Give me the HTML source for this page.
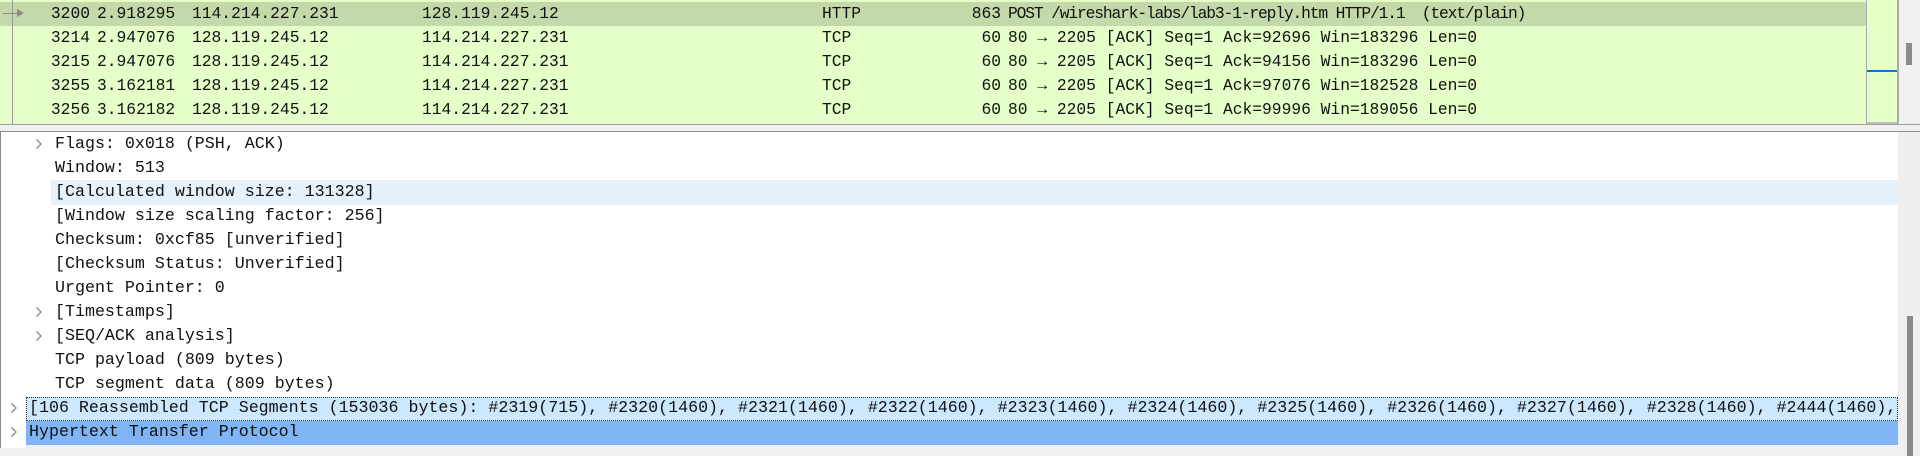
<!DOCTYPE html>
<html><head><meta charset="utf-8"><style>
*{margin:0;padding:0;box-sizing:border-box}
body{width:1920px;height:448px;background:#f0f0f0;position:relative;overflow:hidden;font-family:"Liberation Mono",monospace;font-size:16.3px;color:#111}
.a{position:absolute;white-space:pre;line-height:24px}
.d{font-size:16.65px}
#top{position:absolute;left:0;top:0;width:1920px;height:125px;background:#e4ffc7;border-bottom:1px solid #a0a0a0}
.row{position:absolute;left:0;width:1866px;height:24px}
.sel{background:#c4d9a9;top:2px;border-radius:2px}
#det{position:absolute;left:0;top:131px;width:1920px;height:317px;background:#fff;border-top:1px solid #8c8c8c;border-left:1px solid #8c8c8c}
.chev{position:absolute;width:8px;height:12px}
</style></head><body>
<div id="top">
  <div class="row sel" style="top:2px"></div>
  <div style="position:absolute;left:12px;top:0;width:1px;height:124px;background:#999"></div>
  <div style="position:absolute;left:3px;top:13px;width:16px;height:1px;background:#8a8a8a"></div>
  <div style="position:absolute;left:17px;top:9px;width:0;height:0;border-left:7px solid #8a8a8a;border-top:4px solid transparent;border-bottom:4px solid transparent"></div>
  <div style="position:absolute;left:1866px;top:0;width:1px;height:124px;background:#aaa"></div>
  <div style="position:absolute;left:1897px;top:0;width:2px;height:124px;background:#aaa"></div>
  <div style="position:absolute;left:1867px;top:122px;width:30px;height:2px;background:#bbb"></div>
  <div style="position:absolute;left:1867px;top:70px;width:30px;height:2px;background:#0078d7"></div>
  <div style="position:absolute;left:1899px;top:0;width:21px;height:124px;background:#f0f0f0"></div>
  <div style="position:absolute;left:1906px;top:43px;width:6px;height:22px;background:#8a8a8a"></div>
</div>
<div class="a" style="left:0;top:2px;width:90px;text-align:right">3200</div>
<div class="a" style="left:97px;top:2px">2.918295</div>
<div class="a" style="left:192px;top:2px">114.214.227.231</div>
<div class="a" style="left:422px;top:2px">128.119.245.12</div>
<div class="a" style="left:822px;top:2px">HTTP</div>
<div class="a" style="left:900px;top:2px;width:101px;text-align:right">863</div>
<div class="a" style="left:1008px;top:2px;letter-spacing:-1.15px">POST /wireshark-labs/lab3-1-reply.htm HTTP/1.1  (text/plain)</div>

<div class="a" style="left:0;top:26px;width:90px;text-align:right">3214</div>
<div class="a" style="left:97px;top:26px">2.947076</div>
<div class="a" style="left:192px;top:26px">128.119.245.12</div>
<div class="a" style="left:422px;top:26px">114.214.227.231</div>
<div class="a" style="left:822px;top:26px">TCP</div>
<div class="a" style="left:900px;top:26px;width:101px;text-align:right">60</div>
<div class="a" style="left:1008px;top:26px">80 → 2205 [ACK] Seq=1 Ack=92696 Win=183296 Len=0</div>

<div class="a" style="left:0;top:50px;width:90px;text-align:right">3215</div>
<div class="a" style="left:97px;top:50px">2.947076</div>
<div class="a" style="left:192px;top:50px">128.119.245.12</div>
<div class="a" style="left:422px;top:50px">114.214.227.231</div>
<div class="a" style="left:822px;top:50px">TCP</div>
<div class="a" style="left:900px;top:50px;width:101px;text-align:right">60</div>
<div class="a" style="left:1008px;top:50px">80 → 2205 [ACK] Seq=1 Ack=94156 Win=183296 Len=0</div>

<div class="a" style="left:0;top:74px;width:90px;text-align:right">3255</div>
<div class="a" style="left:97px;top:74px">3.162181</div>
<div class="a" style="left:192px;top:74px">128.119.245.12</div>
<div class="a" style="left:422px;top:74px">114.214.227.231</div>
<div class="a" style="left:822px;top:74px">TCP</div>
<div class="a" style="left:900px;top:74px;width:101px;text-align:right">60</div>
<div class="a" style="left:1008px;top:74px">80 → 2205 [ACK] Seq=1 Ack=97076 Win=182528 Len=0</div>

<div class="a" style="left:0;top:98px;width:90px;text-align:right">3256</div>
<div class="a" style="left:97px;top:98px">3.162182</div>
<div class="a" style="left:192px;top:98px">128.119.245.12</div>
<div class="a" style="left:422px;top:98px">114.214.227.231</div>
<div class="a" style="left:822px;top:98px">TCP</div>
<div class="a" style="left:900px;top:98px;width:101px;text-align:right">60</div>
<div class="a" style="left:1008px;top:98px">80 → 2205 [ACK] Seq=1 Ack=99996 Win=189056 Len=0</div>

<div id="det">
  <div style="position:absolute;left:50px;top:48px;width:1847px;height:25px;background:#e5f1fb"></div>
  <div style="position:absolute;left:25px;top:265px;width:1872px;height:24px;background:#cce8ff;border:1px dotted #333"></div>
  <div style="position:absolute;left:25px;top:289px;width:1872px;height:24px;background:#80b5f5"></div>
  <div style="position:absolute;left:25px;top:313px;width:1872px;height:10px;background:#f0f0f0"></div>
  <div style="position:absolute;left:1897px;top:0;width:22px;height:317px;background:#efefef"></div>
  <div style="position:absolute;left:1919px;top:0;width:1px;height:317px;background:#8c8c8c"></div>
  <div style="position:absolute;left:1906px;top:184px;width:6px;height:140px;background:#8a8a8a"></div>
</div>
<svg class="chev" style="left:35px;top:138px" viewBox="0 0 8 12"><path d="M1.5 1.5 L6 6 L1.5 10.5" fill="none" stroke="#8a8a8a" stroke-width="1.3"/></svg>
<svg class="chev" style="left:35px;top:306px" viewBox="0 0 8 12"><path d="M1.5 1.5 L6 6 L1.5 10.5" fill="none" stroke="#8a8a8a" stroke-width="1.3"/></svg>
<svg class="chev" style="left:35px;top:330px" viewBox="0 0 8 12"><path d="M1.5 1.5 L6 6 L1.5 10.5" fill="none" stroke="#8a8a8a" stroke-width="1.3"/></svg>
<svg class="chev" style="left:10px;top:402px" viewBox="0 0 8 12"><path d="M1.5 1.5 L6 6 L1.5 10.5" fill="none" stroke="#8a8a8a" stroke-width="1.3"/></svg>
<svg class="chev" style="left:10px;top:426px" viewBox="0 0 8 12"><path d="M1.5 1.5 L6 6 L1.5 10.5" fill="none" stroke="#8a8a8a" stroke-width="1.3"/></svg>
<div class="a d" style="left:55px;top:132px">Flags: 0x018 (PSH, ACK)</div>
<div class="a d" style="left:55px;top:156px">Window: 513</div>
<div class="a d" style="left:55px;top:180px">[Calculated window size: 131328]</div>
<div class="a d" style="left:55px;top:204px">[Window size scaling factor: 256]</div>
<div class="a d" style="left:55px;top:228px">Checksum: 0xcf85 [unverified]</div>
<div class="a d" style="left:55px;top:252px">[Checksum Status: Unverified]</div>
<div class="a d" style="left:55px;top:276px">Urgent Pointer: 0</div>
<div class="a d" style="left:55px;top:300px">[Timestamps]</div>
<div class="a d" style="left:55px;top:324px">[SEQ/ACK analysis]</div>
<div class="a d" style="left:55px;top:348px">TCP payload (809 bytes)</div>
<div class="a d" style="left:55px;top:372px">TCP segment data (809 bytes)</div>
<div class="a d" style="left:29px;top:396px;width:1868px;overflow:hidden">[106 Reassembled TCP Segments (153036 bytes): #2319(715), #2320(1460), #2321(1460), #2322(1460), #2323(1460), #2324(1460), #2325(1460), #2326(1460), #2327(1460), #2328(1460), #2444(1460), #2445(1460)</div>
<div class="a d" style="left:29px;top:420px">Hypertext Transfer Protocol</div>
</body></html>
